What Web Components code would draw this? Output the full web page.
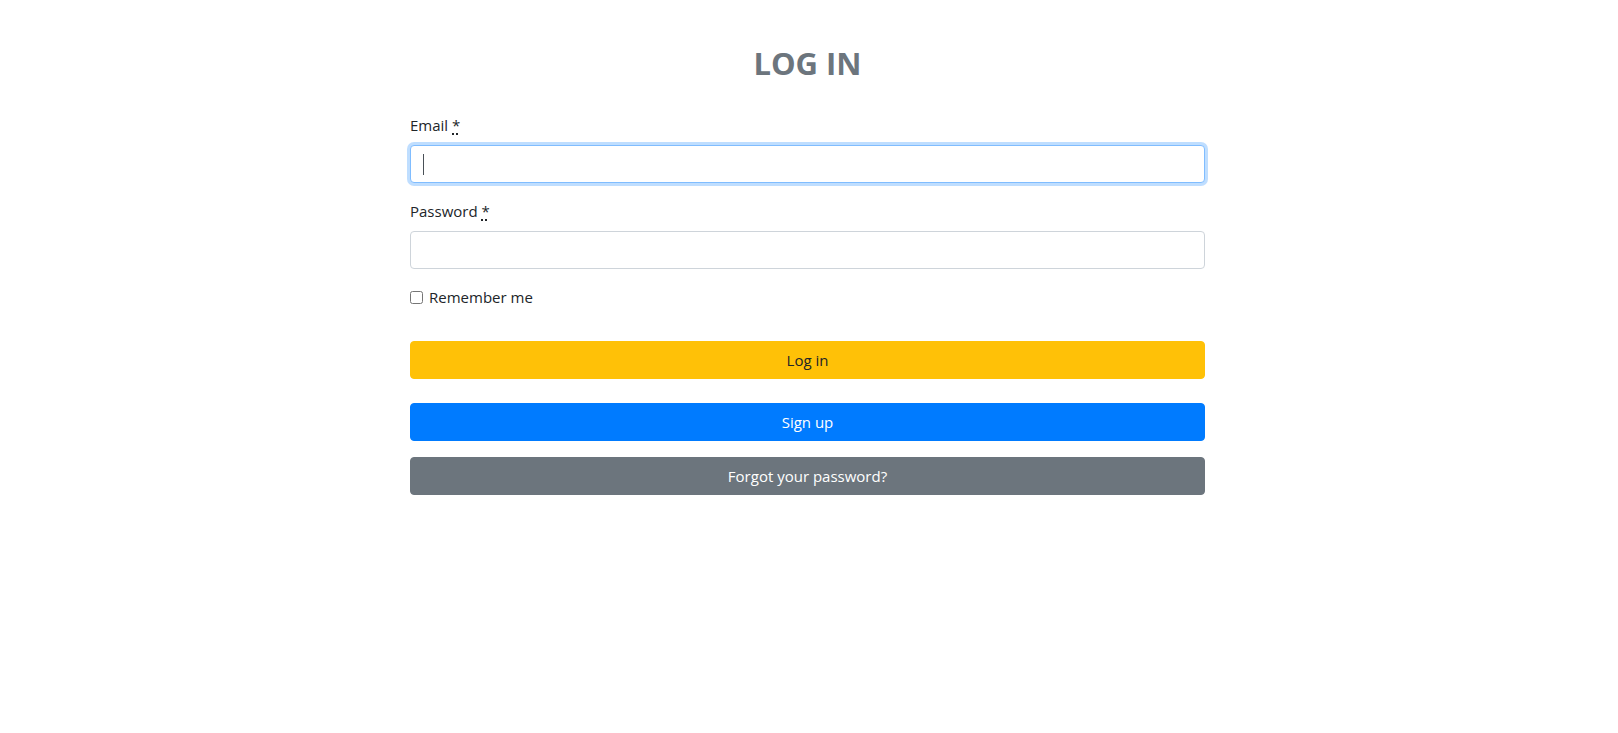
<!DOCTYPE html>
<html lang="en">
<head>
<meta charset="utf-8">
<title>Log in</title>
<style>
body { margin: 0; background: #fff; color: #212529; font: 15px/24px "Open Sans", "Noto Sans", sans-serif; }
</style>
</head>
<body>
<login-page></login-page>
<script>
const base = '*{box-sizing:border-box}';

class TextField extends HTMLElement {
  connectedCallback() {
    const type = this.getAttribute('type');
    this.attachShadow({ mode: 'open', delegatesFocus: true }).innerHTML = `
      <style>${base}
        :host { display: block; margin-bottom: 16px; }
        label { display: block; margin-bottom: 8px; }
        abbr { text-decoration: underline dotted 2px; text-underline-offset: 2px; text-decoration-skip-ink: none; cursor: help; }
        input { display: block; width: 100%; height: 38px; padding: 6px 12px; font: inherit; color: #495057;
          background: #fff; border: 1px solid #ced4da; border-radius: 4px; outline: 0; }
        :host([active]) input { border-color: #80bdff; box-shadow: 0 0 0 3px rgba(0,123,255,.25); }
        /* steady caret bar while the active field is empty */
        :host([active]) input:placeholder-shown { caret-color: transparent;
          background: linear-gradient(#495057, #495057) 12px center / 1px 21px no-repeat #fff; }
      </style>
      <label for="field"><slot></slot> <abbr title="required">*</abbr></label>
      <input id="field" type="${type}" placeholder=" " required>`;
    if (this.hasAttribute('active')) this.shadowRoot.querySelector('input').focus();
  }
}
customElements.define('text-field', TextField);

class CheckField extends HTMLElement {
  connectedCallback() {
    this.attachShadow({ mode: 'open' }).innerHTML = `
      <style>${base}
        :host { display: block; }
        label { display: flex; align-items: center; gap: 6px; }
        input { width: 13px; height: 13px; margin: 0; }
      </style>
      <label><input type="checkbox"><span><slot></slot></span></label>`;
  }
}
customElements.define('check-field', CheckField);

class ActionButton extends HTMLElement {
  connectedCallback() {
    const href = this.getAttribute('href');
    const tag = href ? 'a' : 'button';
    const attr = href ? `href="${href}"` : 'type="submit"';
    this.attachShadow({ mode: 'open' }).innerHTML = `
      <style>${base}
        :host { display: block; --fill: #ffc107; --ink: #212529; }
        :host([kind=primary]) { --fill: #007bff; --ink: #fff; }
        :host([kind=secondary]) { --fill: #6c757d; --ink: #fff; }
        a, button { display: block; width: 100%; padding: 6px 12px; font: inherit; text-align: center;
          text-decoration: none; color: var(--ink); background: var(--fill);
          border: 1px solid var(--fill); border-radius: 4px; cursor: pointer; }
      </style>
      <${tag} ${attr}><slot></slot></${tag}>`;
  }
}
customElements.define('action-button', ActionButton);

class LoginPage extends HTMLElement {
  connectedCallback() {
    this.attachShadow({ mode: 'open' }).innerHTML = `
      <style>${base}
        :host { display: block; padding: 44px 18px 44px 15px; }
        main { max-width: 795px; margin: 0 auto; }
        h1 { margin: 0 0 31px; font-size: 31px; line-height: 38px; text-align: center; color: #6c757d; }
        form { margin-bottom: 24px; }
        check-field { margin-bottom: 32px; }
        nav { display: grid; gap: 16px; }
      </style>
      <main>
        <h1>LOG IN</h1>
        <form>
          <text-field type="email" active>Email</text-field>
          <text-field type="password">Password</text-field>
          <check-field>Remember me</check-field>
          <action-button>Log in</action-button>
        </form>
        <nav>
          <action-button kind="primary" href="#signup">Sign up</action-button>
          <action-button kind="secondary" href="#reset">Forgot your password?</action-button>
        </nav>
      </main>`;
  }
}
customElements.define('login-page', LoginPage);
</script>
</body>
</html>
